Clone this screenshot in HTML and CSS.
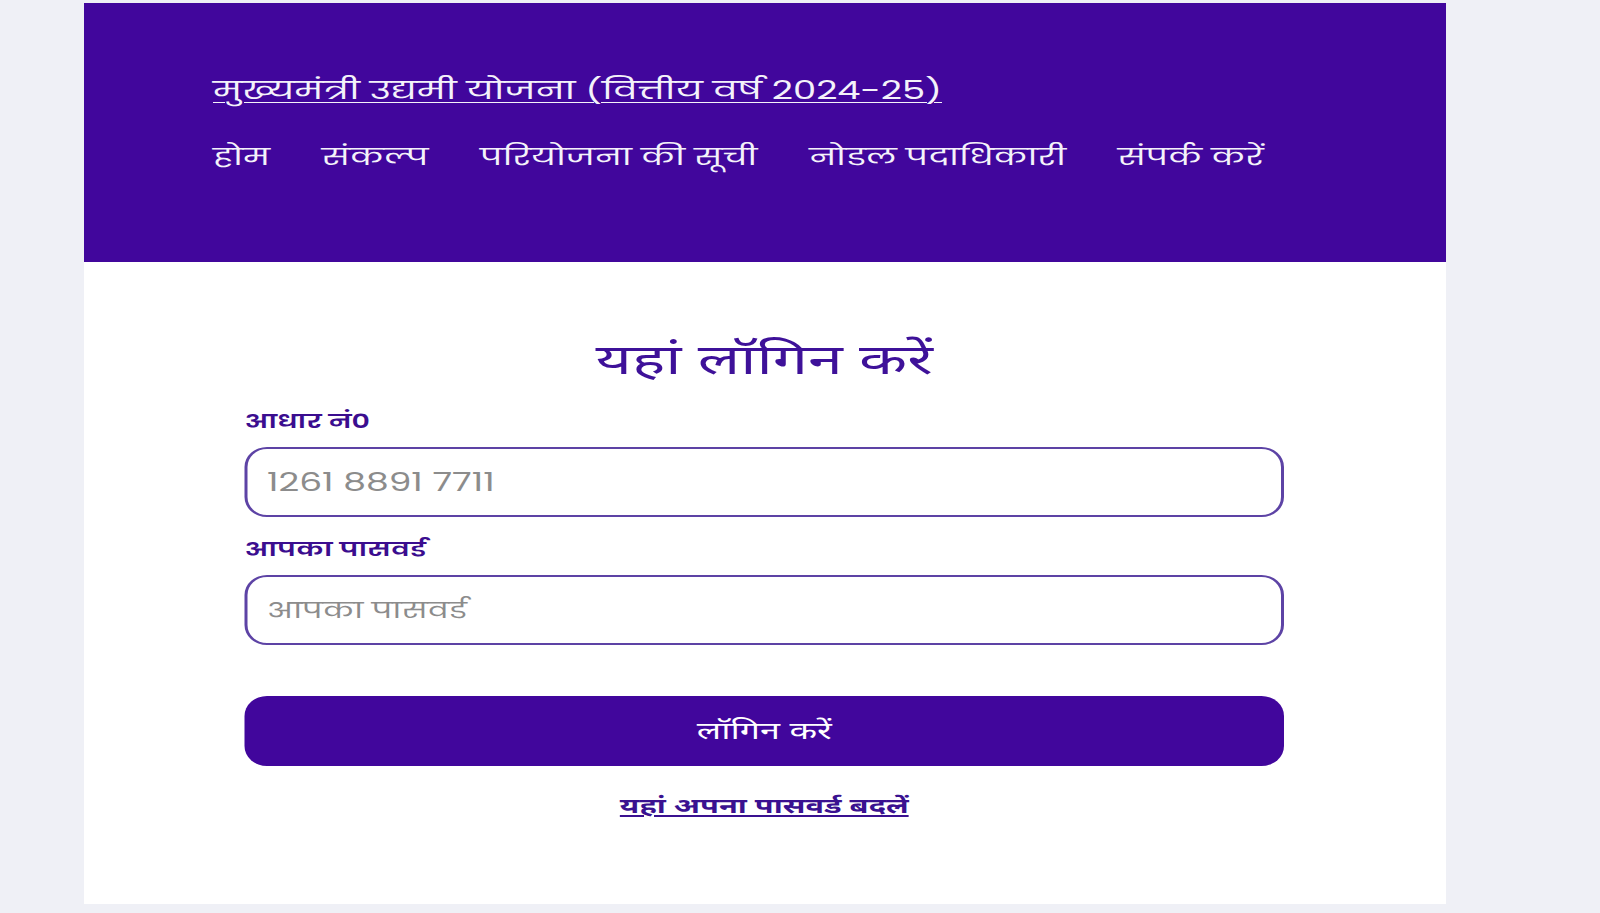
FILE: index.html
```html
<!DOCTYPE html>
<html lang="hi">
<head>
<meta charset="utf-8">
<title>मुख्यमंत्री उद्यमी योजना</title>
<link rel="stylesheet" href="styles.css">
</head>
<body>
<div class="viewport">
  <div class="page">
    <header class="header">
      <a class="site-title" href="#">मुख्यमंत्री उद्यमी योजना (वित्तीय वर्ष 2024-25)</a>
      <nav class="nav">
        <a href="#">होम</a>
        <a href="#">संकल्प</a>
        <a href="#">परियोजना की सूची</a>
        <a href="#">नोडल पदाधिकारी</a>
        <a href="#">संपर्क करें</a>
      </nav>
    </header>
    <main class="card">
      <form class="login-form">
        <h1 class="login-title">यहां लॉगिन करें</h1>
        <label class="field-label" for="aadhar">आधार नं0</label>
        <input class="field-input" id="aadhar" type="text" placeholder="1261 8891 7711">
        <label class="field-label" for="pwd">आपका पासवर्ड</label>
        <input class="field-input field-input-hindi" id="pwd" type="password" placeholder="आपका पासवर्ड">
        <button class="login-btn" type="button">लॉगिन करें</button>
        <a class="change-link" href="#">यहां अपना पासवर्ड बदलें</a>
      </form>
    </main>
  </div>
</div>
</body>
</html>
```

FILE: styles.css
```css
html, body {
  margin: 0;
  padding: 0;
}
body {
  background: #eff0f6;
  font-family: "Noto Sans", "Noto Sans Devanagari", sans-serif;
  height: 913px;
  overflow: hidden;
}
.viewport {
  width: 1066.67px;
  transform: scaleX(1.5);
  transform-origin: 0 0;
}
.page {
  width: 908px;
  margin: 3px 0 0 56px;
}
.header {
  background: #41069c;
  height: 259px;
  box-sizing: border-box;
  padding: 70px 0 0 86px;
  display: flex;
  flex-direction: column;
  align-items: flex-start;
  gap: 30px;
}
.site-title {
  color: #f4f2fa;
  font-family: "Poppins", "Noto Sans Devanagari", sans-serif;
  font-size: 24.6px;
  line-height: 36px;
  text-decoration: underline;
  text-decoration-thickness: 1px;
  text-underline-offset: 3px;
}
.nav {
  display: flex;
  gap: 34.5px;
}
.nav a {
  color: #f4f2fa;
  font-family: "Poppins", "Noto Sans Devanagari", sans-serif;
  font-size: 22.8px;
  line-height: 36px;
  text-decoration: none;
}
.card {
  background: #ffffff;
  height: 642px;
  box-sizing: border-box;
  padding-top: 72px;
}
.login-form {
  width: 693px;
  margin-left: 107px;
  display: flex;
  flex-direction: column;
}
.login-title {
  margin: 0 0 16px;
  text-align: center;
  color: #3e1199;
  font-family: "Noto Sans Devanagari", sans-serif;
  font-size: 41.8px;
  font-weight: 400;
  line-height: 60px;
}
.field-label {
  color: #3b0d8f;
  font-family: "Poppins", "Noto Sans Devanagari", sans-serif;
  font-size: 19px;
  font-weight: 600;
  line-height: 24px;
  margin-bottom: 13px;
}
.field-input {
  box-sizing: border-box;
  height: 70px;
  border: 2px solid #5d43a5;
  border-radius: 15px / 20px;
  padding: 0 13px;
  font-family: "Poppins", "Noto Sans Devanagari", sans-serif;
  font-size: 24px;
  color: #333333;
  background: #ffffff;
  margin-bottom: 21px;
  outline: none;
}
.field-input-hindi {
  font-size: 21px;
}
.field-input::placeholder {
  color: #8c8c8c;
}
.login-btn {
  margin-top: 30px;
  height: 70px;
  padding-top: 4px;
  border: none;
  border-radius: 15px / 20px;
  background: #41069c;
  color: #ffffff;
  font-family: "Noto Sans Devanagari", sans-serif;
  font-size: 24px;
  cursor: pointer;
}
.change-link {
  align-self: center;
  margin-top: 28px;
  color: #3a1190;
  font-family: "Noto Sans Devanagari", sans-serif;
  font-size: 20.5px;
  font-weight: 700;
  line-height: 28px;
  text-decoration: underline;
}
```
